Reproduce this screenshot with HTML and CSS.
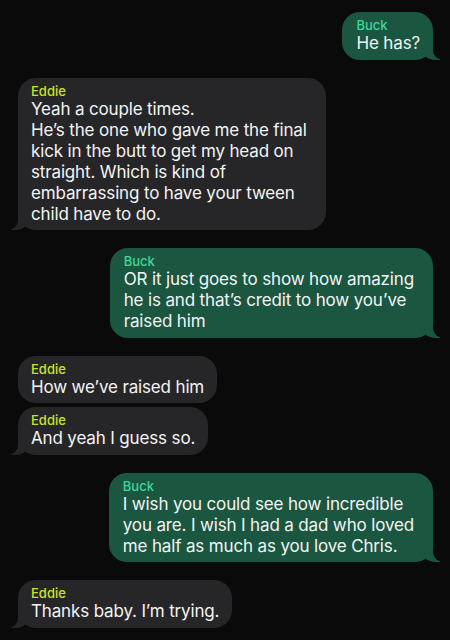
FILE: index.html
```html
<!DOCTYPE html>
<html lang="en">
<head>
<meta charset="utf-8">
<title>Messages</title>
<link rel="stylesheet" href="styles.css">
</head>
<body>
<main class="thread">
  <div class="bubble me tail">
    <div class="name">Buck</div>
    <div class="text">He has?</div>
  </div>

  <div class="bubble them tail group wide">
    <div class="name">Eddie</div>
    <div class="text">Yeah a couple times.<br>He’s the one who gave me the final<br>kick in the butt to get my head on<br>straight. Which is kind of<br>embarrassing to have your tween<br>child have to do.</div>
  </div>

  <div class="bubble me tail group wide">
    <div class="name">Buck</div>
    <div class="text">OR it just goes to show how amazing<br>he is and that’s credit to how you’ve<br>raised him</div>
  </div>

  <div class="bubble them group">
    <div class="name">Eddie</div>
    <div class="text">How we’ve raised him</div>
  </div>
  <div class="bubble them tail">
    <div class="name">Eddie</div>
    <div class="text">And yeah I guess so.</div>
  </div>

  <div class="bubble me tail group wide">
    <div class="name">Buck</div>
    <div class="text">I wish you could see how incredible<br>you are. I wish I had a dad who loved<br>me half as much as you love Chris.</div>
  </div>

  <div class="bubble them tail group">
    <div class="name">Eddie</div>
    <div class="text">Thanks baby. I’m trying.</div>
  </div>
</main>
</body>
</html>
```

FILE: styles.css
```css
html, body {
  margin: 0;
  padding: 0;
  background: #0a0a0a;
}

body {
  font-family: Inter, "Noto Sans", "Liberation Sans", sans-serif;
  color: #f4f4f4;
  width: 450px;
  height: 640px;
  overflow: hidden;
}

.thread {
  display: flex;
  flex-direction: column;
  padding: 12px 17px 0 18px;
  gap: 4px;
}

.bubble {
  position: relative;
  border-radius: 18px;
  padding: 5px 13px 5.5px 13px;
  width: fit-content;
}

.bubble.wide {
  padding-right: 19px;
}

.bubble.group {
  margin-top: 14px;
}

.bubble.me {
  align-self: flex-end;
  background: #1a5640;
  padding-left: 14px;
}

.bubble.them {
  align-self: flex-start;
  background: #262628;
}

.name {
  position: relative;
  z-index: 2;
  font-size: 13px;
  line-height: 16px;
  font-weight: 500;
}

.me .name {
  color: #3fd89b;
}

.them .name {
  color: #c9e41f;
}

.text {
  position: relative;
  z-index: 2;
  font-size: 17px;
  line-height: 21px;
  letter-spacing: -0.15px;
  white-space: nowrap;
}

/* tails */
.tail::before,
.tail::after {
  content: "";
  position: absolute;
  bottom: 0;
  height: 20px;
}

.them.tail::before {
  left: -7px;
  width: 20px;
  background: #262628;
  border-bottom-right-radius: 16px 14px;
  z-index: 0;
}

.them.tail::after {
  left: -26px;
  width: 26px;
  background: #0a0a0a;
  border-bottom-right-radius: 10px;
  z-index: 1;
}

.me.tail::before {
  right: -7px;
  width: 20px;
  background: #1a5640;
  border-bottom-left-radius: 16px 14px;
  z-index: 0;
}

.me.tail::after {
  right: -26px;
  width: 26px;
  background: #0a0a0a;
  border-bottom-left-radius: 10px;
  z-index: 1;
}
```
